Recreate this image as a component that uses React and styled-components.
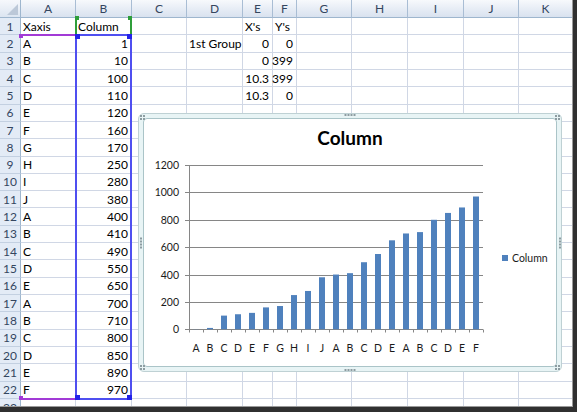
import React from "react";
import styled, { createGlobalStyle } from "styled-components";

const GlobalStyle = createGlobalStyle`
  body {
    margin: 0;
    background: #fff;
    font-family: Lato, "Liberation Sans", sans-serif;
  }
`;

const COLUMNS = [
  { name: "A", width: 55 },
  { name: "B", width: 56 },
  { name: "C", width: 55 },
  { name: "D", width: 56 },
  { name: "E", width: 30 },
  { name: "F", width: 24 },
  { name: "G", width: 55 },
  { name: "H", width: 56 },
  { name: "I", width: 56 },
  { name: "J", width: 55 },
  { name: "K", width: 54 },
];

const SERIES = [
  ["A", 1], ["B", 10], ["C", 100], ["D", 110], ["E", 120], ["F", 160],
  ["G", 170], ["H", 250], ["I", 280], ["J", 380], ["A", 400], ["B", 410],
  ["C", 490], ["D", 550], ["E", 650], ["A", 700], ["B", 710], ["C", 800],
  ["D", 850], ["E", 890], ["F", 970],
];

// sheet contents, row number -> column -> value
const SHEET = {
  1: { A: "Xaxis", B: "Column", E: "X's", F: "Y's" },
  2: { D: "1st Group", E: 0, F: 0 },
  3: { E: 0, F: 399 },
  4: { E: 10.3, F: 399 },
  5: { E: 10.3, F: 0 },
};
SERIES.forEach(([label, value], i) => {
  SHEET[i + 2] = { ...(SHEET[i + 2] || {}), A: label, B: value };
});

const ROW_COUNT = 23;

const Window = styled.div`
  width: 577px;
  height: 412px;
  box-sizing: border-box;
  border-right: 4px solid #303030;
  border-bottom: 5px solid #303030;
  overflow: hidden;
  background: #fff;
`;

const Viewport = styled.div`
  position: relative;
  height: 100%;
  box-sizing: border-box;
  overflow: hidden;
  border-right: 1px solid #9a9a9a;
  border-bottom: 1px solid #9a9a9a;
`;

const Sheet = styled.div`
  display: grid;
  grid-template-columns: 21px ${(p) => p.$columns};
  grid-template-rows: 18px repeat(${ROW_COUNT}, 17.32px);
`;

const Corner = styled.div`
  position: relative;
  box-sizing: border-box;
  background: linear-gradient(#f6f8fc, #dce5f1);
  border-right: 1px solid #9eb6ce;
  border-bottom: 1px solid #9eb6ce;

  &::after {
    content: "";
    position: absolute;
    right: 2px;
    bottom: 2px;
    border-left: 11px solid transparent;
    border-bottom: 11px solid #bcc8d8;
  }
`;

const ColHeader = styled.div`
  box-sizing: border-box;
  display: flex;
  align-items: center;
  justify-content: center;
  background: linear-gradient(#f7f9fc 0%, #e6ecf5 55%, #d9e2ef 100%);
  border-right: 1px solid #a9bdd4;
  border-bottom: 1px solid #9eb6ce;
  color: #34465f;
  font-size: 12px;
`;

const RowHeader = styled.div`
  box-sizing: border-box;
  display: flex;
  align-items: center;
  justify-content: center;
  background: #e3ebf6;
  border-right: 1px solid #9eb6ce;
  border-bottom: 1px solid #c3d0e1;
  color: #34465f;
  font-size: 12px;
`;

const Cell = styled.div`
  box-sizing: border-box;
  display: flex;
  align-items: center;
  justify-content: ${(p) => (p.$numeric ? "flex-end" : "flex-start")};
  padding: 0 3px 0 2px;
  border-right: 1px solid #d0d7e5;
  border-bottom: 1px solid #d0d7e5;
  color: #000;
  font-size: 12px;
  white-space: nowrap;
`;

/* coloured outlines Excel draws around the chart's source ranges */
const RangeOutline = styled.div`
  position: absolute;
  box-sizing: border-box;
  left: ${(p) => p.$left}px;
  top: ${(p) => p.$top}px;
  width: ${(p) => p.$width}px;
  height: ${(p) => p.$height}px;
  border: 0 solid ${(p) => p.$color};
  border-width: ${(p) => p.$sides};
  pointer-events: none;
`;

const HANDLE_SPOTS = {
  tl: "left: -2px; top: -2px;",
  tr: "right: -2px; top: -2px;",
  bl: "left: -2px; bottom: -2px;",
  br: "right: -2px; bottom: -2px;",
};

const Handle = styled.span`
  position: absolute;
  width: ${(p) => p.$size}px;
  height: ${(p) => p.$size}px;
  background: ${(p) => p.$color};
  ${(p) => HANDLE_SPOTS[p.$spot]}
`;

const Range = ({ left, top, width, height, color, handleColor, sides, handles, size = 5 }) => (
  <RangeOutline $left={left} $top={top} $width={width} $height={height} $color={color} $sides={sides}>
    {handles.map((spot) => (
      <Handle key={spot} $spot={spot} $size={size} $color={handleColor || color} />
    ))}
  </RangeOutline>
);

const ChartFrame = styled.div`
  position: absolute;
  left: 138px;
  top: 113px;
  width: 424px;
  height: 259px;
  box-sizing: border-box;
  padding: 4px;
  border: 1px solid #bfd1d4;
  border-radius: 6px;
  background: #e8f4f5;
`;

const ChartInner = styled.div`
  height: 100%;
  box-sizing: border-box;
  display: flex;
  flex-direction: column;
  border: 1px solid #aac4c8;
  border-radius: 4px;
  background: #fff;
`;

const ChartTitle = styled.div`
  padding-top: 7px;
  height: 24px;
  line-height: 24px;
  text-align: center;
  font-size: 19px;
  font-weight: 700;
  color: #000;
`;

const PlotRow = styled.div`
  flex: 1;
  display: flex;
  align-items: center;
`;

const Legend = styled.div`
  display: flex;
  align-items: center;
  padding-left: 12px;
  font-size: 10.5px;
  color: #1a1a1a;
`;

const Swatch = styled.span`
  width: 6px;
  height: 6px;
  margin-right: 4px;
  background: #4f81bd;
`;

const GRIP_SPOTS = {
  tl: "left: 1px; top: 1px;",
  tr: "right: 1px; top: 1px;",
  bl: "left: 1px; bottom: 1px;",
  br: "right: 1px; bottom: 1px;",
  top: "left: 50%; top: 0; transform: translateX(-50%);",
  bottom: "left: 50%; bottom: 0; transform: translateX(-50%);",
  left: "left: 1px; top: 50%; transform: translateY(-50%);",
  right: "right: 0; top: 50%; transform: translateY(-50%);",
};

const Grip = styled.div`
  position: absolute;
  display: flex;
  flex-direction: ${(p) => (p.$spot === "left" || p.$spot === "right" ? "column" : "row")};
  flex-wrap: wrap;
  gap: 1px;
  width: ${(p) => (p.$spot.length === 2 ? "5px" : "auto")};
  ${(p) => GRIP_SPOTS[p.$spot]}
`;

const Dot = styled.span`
  width: 2px;
  height: 2px;
  background: #8d9ca1;
`;

const GripDots = ({ spot }) => (
  <Grip $spot={spot}>
    <Dot />
    <Dot />
    <Dot />
    <Dot />
  </Grip>
);

// chart geometry, in page pixels
const Y_ZERO = 329.3;
const PX_PER_UNIT = 27.38 / 200;
const X_START = 189;
const CAT_WIDTH = 14;
const X_END = X_START + CAT_WIDTH * SERIES.length;
const yOf = (v) => Y_ZERO - v * PX_PER_UNIT;
const crisp = (v) => Math.round(v) + 0.5;

const ColumnChart = () => {
  const ticks = [0, 200, 400, 600, 800, 1000, 1200];
  return (
    <svg
      width="346"
      height="216"
      viewBox="144 150 346 216"
      style={{ display: "block", flex: "none" }}
      fontFamily="Lato, 'Liberation Sans', sans-serif"
      fontSize="10.5"
    >
      {ticks.map((t) => (
        <g key={t}>
          <line x1={185} x2={X_END} y1={crisp(yOf(t))} y2={crisp(yOf(t))} stroke="#868686" />
          <text x={179} y={yOf(t)} textAnchor="end" dominantBaseline="central" fill="#1a1a1a">
            {t}
          </text>
        </g>
      ))}
      <line
        x1={X_START + 0.5}
        x2={X_START + 0.5}
        y1={crisp(yOf(1200))}
        y2={crisp(Y_ZERO)}
        stroke="#868686"
      />
      {SERIES.concat([null]).map((_, i) => (
        <line
          key={"t" + i}
          x1={X_START + CAT_WIDTH * i + 0.5}
          x2={X_START + CAT_WIDTH * i + 0.5}
          y1={crisp(Y_ZERO)}
          y2={crisp(Y_ZERO) + 3}
          stroke="#868686"
        />
      ))}
      {SERIES.map(([label, value], i) => {
        const cx = X_START + CAT_WIDTH * i + CAT_WIDTH / 2;
        const top = yOf(value);
        return (
          <g key={"b" + i}>
            <rect x={cx - 3} y={top} width="6" height={Y_ZERO - top} fill="#4f81bd" />
            <text x={cx} y={348} textAnchor="middle" dominantBaseline="central" fill="#1a1a1a">
              {label}
            </text>
          </g>
        );
      })}
    </svg>
  );
};

export default function App() {
  const template = COLUMNS.map((c) => c.width + "px").join(" ");
  const rows = Array.from({ length: ROW_COUNT }, (_, i) => i + 1);

  return (
    <>
      <GlobalStyle />
      <Window>
        <Viewport>
          <Sheet $columns={template}>
            <Corner />
            {COLUMNS.map((c) => (
              <ColHeader key={c.name}>{c.name}</ColHeader>
            ))}
            {rows.map((r) => (
              <React.Fragment key={r}>
                <RowHeader>{r}</RowHeader>
                {COLUMNS.map((c) => {
                  const value = SHEET[r] && SHEET[r][c.name];
                  return (
                    <Cell key={c.name} $numeric={typeof value === "number"}>
                      {value}
                    </Cell>
                  );
                })}
              </React.Fragment>
            ))}
          </Sheet>

          {/* source range highlights: categories, series name, values */}
          <Range left={21} top={34} width={55} height={366} color="#a23ad6" sides="2px 0 2px 0" handles={["tl", "bl"]} size={4} />
          <Range left={75} top={18} width={57} height={17} color="#2f9e3a" sides="0 2px" handles={["tl", "tr"]} size={4} />
          <Range left={75} top={34} width={57} height={366} color="#4f4ff0" handleColor="#2323e8" sides="2px" handles={["tl", "tr", "bl", "br"]} />

          <ChartFrame>
            {Object.keys(GRIP_SPOTS).map((spot) => (
              <GripDots key={spot} spot={spot} />
            ))}
            <ChartInner>
              <ChartTitle>Column</ChartTitle>
              <PlotRow>
                <ColumnChart />
                <Legend>
                  <Swatch />
                  Column
                </Legend>
              </PlotRow>
            </ChartInner>
          </ChartFrame>
        </Viewport>
      </Window>
    </>
  );
}
